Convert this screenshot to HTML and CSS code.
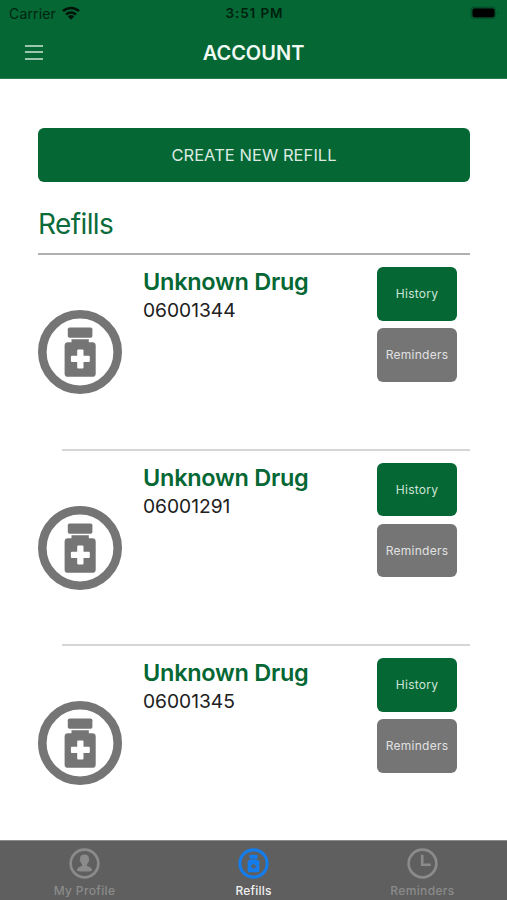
FILE: index.html
```html
<!DOCTYPE html>
<html lang="en">
<head>
<meta charset="utf-8">
<title>Account</title>
<link rel="stylesheet" href="styles.css">
</head>
<body>
<svg class="defs" width="0" height="0" aria-hidden="true">
  <symbol id="bottle" viewBox="0 0 84 84">
    <circle cx="42" cy="42" r="37.700" fill="none" stroke="currentColor" stroke-width="8.600"/>
    <rect x="29.800" y="17.500" width="24.600" height="10.300" rx="1.800" fill="currentColor"/>
    <path fill="currentColor" fill-rule="evenodd" d="M33.500 29.300h17.300v2.900h3.500a3.400 3.400 0 0 1 3.400 3.400v27.800a3.400 3.400 0 0 1-3.400 3.400H30a3.400 3.400 0 0 1-3.400-3.400V35.600a3.400 3.400 0 0 1 3.400-3.400h3.500zM40.200 39.500a1 1 0 0 0-1 1v5.200h-5.300a1 1 0 0 0-1 1v4.400a1 1 0 0 0 1 1h5.300v5.300a1 1 0 0 0 1 1h4.300a1 1 0 0 0 1-1v-5.300h5.300a1 1 0 0 0 1-1v-4.400a1 1 0 0 0-1-1h-5.300v-5.200a1 1 0 0 0-1-1z"/>
  </symbol>
</svg>
<div class="screen">
  <header class="header">
    <div class="status">
      <div class="status-left"><span class="carrier">Carrier</span>
        <svg class="wifi" viewBox="0 0 18 14"><g fill="none" stroke="#00140a" stroke-width="2.500"><path d="M1 5.200a11.500 11.500 0 0 1 16 0"/><path d="M4 8.600a7.200 7.200 0 0 1 10 0"/></g><path fill="#00140a" d="M5.900 10.500a4.500 4.500 0 0 1 6.200 0L9 13.700z"/></svg>
      </div>
      <span class="clock">3:51 PM</span>
      <svg class="battery" viewBox="0 0 30 14"><rect x=".5" y=".5" width="25.500" height="12.500" rx="4" fill="#03502a"/><rect x="2.500" y="2.500" width="22" height="8.800" rx="2.200" fill="#000"/><path fill="#03502a" d="M27.300 4.800q2 2 0 4z"/></svg>
    </div>
    <div class="nav">
      <div class="menu"><i></i><i></i><i></i></div>
      <h1 class="title">ACCOUNT</h1>
      <div></div>
    </div>
  </header>
  <main class="content">
    <button class="create"><span>CREATE NEW REFILL</span></button>
    <h2 class="heading"><span>Refills</span></h2>
    <section class="row">
      <svg class="drug-icon"><use href="#bottle"/></svg>
      <div class="info"><div class="name">Unknown Drug</div><div class="number">06001344</div></div>
      <div class="actions"><button class="btn">History</button><button class="btn gray">Reminders</button></div>
    </section>
    <section class="row">
      <svg class="drug-icon"><use href="#bottle"/></svg>
      <div class="info"><div class="name">Unknown Drug</div><div class="number">06001291</div></div>
      <div class="actions"><button class="btn">History</button><button class="btn gray">Reminders</button></div>
    </section>
    <section class="row">
      <svg class="drug-icon"><use href="#bottle"/></svg>
      <div class="info"><div class="name">Unknown Drug</div><div class="number">06001345</div></div>
      <div class="actions"><button class="btn">History</button><button class="btn gray">Reminders</button></div>
    </section>
  </main>
  <nav class="tabs">
    <div class="tab">
      <svg class="tab-icon" viewBox="0 0 30 30"><circle cx="15" cy="15" r="13.400" fill="none" stroke="currentColor" stroke-width="2.600"/><path fill="currentColor" d="M15 6.300c3 0 4.600 1.700 4.300 4.600.7.700.3 2-.5 2.500-.3 1.200-.8 2-1.500 2.600v1.200c1.500.9 4.900 1.200 5 4.700-1.800.7-4.500.8-7.300.8s-5.500-.1-7.300-.8c.1-3.500 3.500-3.800 5-4.700V16c-.7-.6-1.200-1.400-1.500-2.600-.8-.5-1.200-1.800-.5-2.500-.3-2.900 1.300-4.600 4.300-4.600z"/></svg>
      <span>My Profile</span>
    </div>
    <div class="tab active">
      <svg class="tab-icon" viewBox="0 0 30 30"><circle cx="15" cy="15" r="13.200" fill="none" stroke="currentColor" stroke-width="3"/><rect x="11" y="6.500" width="8" height="3.800" rx=".7" fill="currentColor"/><path fill="currentColor" fill-rule="evenodd" d="M12 10.800h6v1h1.500a1.200 1.200 0 0 1 1.200 1.200v9.200a1.200 1.200 0 0 1-1.200 1.200h-9a1.200 1.200 0 0 1-1.200-1.200V13a1.200 1.200 0 0 1 1.200-1.200H12zM14.200 15.400v1.500h-1.500v1.700h1.500v1.500h1.700v-1.500h1.500v-1.700h-1.500v-1.500z"/></svg>
      <span>Refills</span>
    </div>
    <div class="tab">
      <svg class="tab-icon" viewBox="0 0 30 30"><circle cx="15" cy="15" r="13.400" fill="none" stroke="currentColor" stroke-width="2.600"/><path d="M14.700 6.500v9.700h8.300" fill="none" stroke="currentColor" stroke-width="2.600"/></svg>
      <span>Reminders</span>
    </div>
  </nav>
</div>
</body>
</html>
```

FILE: styles.css
```css
* { box-sizing: border-box; }
body { margin: 0; background: #fff; font-family: Inter, "Liberation Sans", sans-serif; }
.defs { display: block; }
h1, h2 { margin: 0; font-weight: inherit; }
button { border: 0; padding: 0; margin: 0; font-family: inherit; }
.screen { width: 507px; height: 900px; display: flex; flex-direction: column; overflow: hidden; }
.header { height: 79px; flex: none; background: #046734; border-bottom: 1px solid #2c7b50; }
.status { height: 27px; display: grid; grid-template-columns: 1fr auto 1fr; align-items: center; padding: 0 7px 0 9px; }
.status-left { display: flex; align-items: center; gap: 6px; }
.carrier { font-size: 14px; line-height: 27px; color: #00240f; letter-spacing: 0.150px; }
.wifi { width: 18px; height: 14px; margin-top: -1px; }
.clock { font-size: 13.500px; line-height: 27px; font-weight: 600; color: #00200e; letter-spacing: 0.900px; }
.battery { width: 30px; height: 14px; justify-self: end; margin-top: -1px; }
.nav { height: 51px; display: grid; grid-template-columns: 1fr auto 1fr; align-items: center; }
.menu { display: flex; flex-direction: column; gap: 4.500px; margin: -1px 0 0 25px; width: 18px; }
.menu i { height: 2px; background: #9cc6ad; }
.title { font-size: 20px; font-weight: 600; color: #f0faf3; }
.content { flex: 1; min-height: 0; overflow: hidden; padding: 49px 37px 0 38px; }
.create { display: block; width: 432px; height: 54px; border-radius: 6px; background: #046734; color: #dcebe2; font-size: 16.500px; letter-spacing: 0.050px; }
.heading { height: 73px; border-bottom: 2px solid #b1b1b1; padding-top: 25px; font-size: 28px; line-height: 34px; letter-spacing: -0.600px; color: #0b6b3a; }
.row { height: 195.500px; display: grid; grid-template-columns: 105px 234px 80px; align-items: start; background: linear-gradient(#d6d6d6, #d6d6d6) right bottom / 408px 2px no-repeat; }
.row:last-child { background: none; }
.drug-icon { width: 84px; height: 84px; margin-top: 55px; color: #757575; }
.info { padding-top: 11px; }
.name { font-size: 23.500px; line-height: 31px; font-weight: 600; letter-spacing: -0.270px; color: #046734; }
.number { font-size: 19.200px; line-height: 27px; color: #202020; }
.actions { display: flex; flex-direction: column; gap: 7.500px; padding-top: 12px; }
.btn { height: 53.500px; border-radius: 6px; background: #046734; color: #cfe4d7; font-size: 12px; letter-spacing: 0.250px; }
.btn.gray { background: #757575; color: #e1e1e1; }
.tabs { height: 60px; flex: none; background: #5f5f5f; border-top: 1px solid #8b8b8b; display: grid; grid-template-columns: 1fr 1fr 1fr; }
.tab { display: flex; flex-direction: column; align-items: center; padding-top: 7px; color: #8b8b8b; font-size: 12px; font-weight: 500; line-height: 16px; letter-spacing: 0.350px; }
.tab-icon { width: 31px; height: 31px; flex: none; margin-bottom: 4px; }
.active { color: #f0f0f0; letter-spacing: 0.200px; }
.active .tab-icon { color: #147ceb; }
```
